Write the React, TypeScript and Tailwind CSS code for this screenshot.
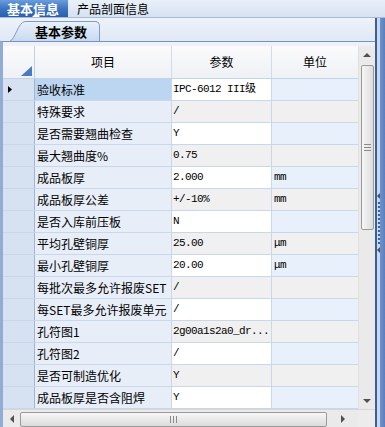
import React from "react";

const rows: [string, string, string][] = [
  ["验收标准", "IPC-6012 III级", ""],
  ["特殊要求", "/", ""],
  ["是否需要翘曲检查", "Y", ""],
  ["最大翘曲度%", "0.75", ""],
  ["成品板厚", "2.000", "mm"],
  ["成品板厚公差", "+/-10%", "mm"],
  ["是否入库前压板", "N", ""],
  ["平均孔壁铜厚", "25.00", "μm"],
  ["最小孔壁铜厚", "20.00", "μm"],
  ["每批次最多允许报废SET", "/", ""],
  ["每SET最多允许报废单元", "/", ""],
  ["孔符图1", "2g00a1s2a0_dr...", ""],
  ["孔符图2", "/", ""],
  ["是否可制造优化", "Y", ""],
  ["成品板厚是否含阻焊", "Y", ""],
];

const Tri = ({ dir }: { dir: "up" | "down" | "left" | "right" }) => {
  const pts =
    dir === "up"
      ? "0,4 4,0 8,4"
      : dir === "down"
      ? "0,0 8,0 4,4"
      : dir === "left"
      ? "4,0 4,8 0,4"
      : "0,0 0,8 4,4";
  const w = dir === "up" || dir === "down" ? 8 : 4;
  const h = dir === "up" || dir === "down" ? 4 : 8;
  return (
    <svg width={w} height={h} viewBox={`0 0 ${w} ${h}`}>
      <polygon points={pts} fill="#505050" />
    </svg>
  );
};

export default function App() {
  return (
    <div className="w-[385px] h-[427px] overflow-hidden flex flex-col bg-[#e3ebf6] font-['Noto_Sans_CJK_SC',sans-serif] text-black">
      {/* top tab bar */}
      <div className="h-[18px] flex items-stretch bg-gradient-to-b from-[#e9f0f9] to-[#d6e2f2] border-b border-[#a9bbd3] shrink-0">
        <div className="relative w-[68px] bg-gradient-to-b from-[#6b9ddc] via-[#3d74c2] to-[#2b5fae] text-white font-bold text-[13px] leading-[17px] pl-[7px]">
          基本信息
          <div className="absolute bottom-0 left-[32px] w-0 h-0 border-l-[4px] border-r-[4px] border-b-[4px] border-l-transparent border-r-transparent border-b-white" />
        </div>
        <div className="pl-[9px] text-[12px] leading-[17px]">产品剖面信息</div>
      </div>

      <div className="flex flex-1 min-h-0">
        <div className="w-[375px] flex flex-col">
          {/* sub tab bar */}
          <div className="h-[23px] shrink-0 flex items-end pl-[10px] bg-gradient-to-b from-[#eef3fa] to-[#dfe8f4]">
            <svg width="15" height="20" viewBox="0 0 15 20" className="block">
              <defs>
                <linearGradient id="tg" x1="0" y1="0" x2="0" y2="1">
                  <stop offset="0" stopColor="#e8f0fa" />
                  <stop offset="1" stopColor="#c9daf0" />
                </linearGradient>
              </defs>
              <path d="M0 20 C 5 19, 8 1, 15 0.5 L15 20 Z" fill="url(#tg)" />
              <path d="M0 20 C 5 19, 8 1, 15 0.5" fill="none" stroke="#7f9cc8" strokeWidth="1" />
            </svg>
            <div className="w-[75px] h-[20px] border-t border-r border-[#7f9cc8] rounded-tr-[5px] bg-gradient-to-b from-[#e8f0fa] to-[#c9daf0] text-[13px] font-bold leading-[19px] text-center pr-[2px]">
              基本参数
            </div>
          </div>

          {/* grid */}
          <div className="flex-1 flex flex-col border-t border-[#7393c6] border-l-[3px] border-l-[#92acd6] bg-[#eef2f8]">
            <div className="h-[4px] shrink-0 bg-[#eef2f8]" />
            <div className="flex">
              <div className="w-[355px] flex flex-col">
                {/* header */}
                <div className="h-[33px] flex border-b border-[#c5d3e6] bg-gradient-to-b from-[#fbfbfc] to-[#eef1f5] text-[12px]">
                  <div className="w-[32px] border-r border-[#c5d0de] flex items-end justify-end pr-[2px] pb-[2px]">
                    <svg width="11" height="10" viewBox="0 0 11 10">
                      <polygon points="11,0 11,10 0,10" fill="#4a7bc0" />
                    </svg>
                  </div>
                  <div className="w-[137px] border-r border-[#d3dbe6] flex items-center justify-center">项目</div>
                  <div className="w-[100px] border-r border-[#d3dbe6] flex items-center justify-center">参数</div>
                  <div className="w-[86px] flex items-center justify-center">单位</div>
                </div>
                {rows.map((r, i) => {
                  const odd = i % 2 === 0;
                  return (
                    <div key={i} className="h-[22px] flex border-b border-[#c9d7ea]">
                      <div className="w-[32px] bg-[#d6e2f1] border-r border-[#9fb5d8] flex items-center pl-[5px]">
                        {i === 0 && (
                          <svg width="4" height="7" viewBox="0 0 4 7">
                            <polygon points="0,0 4,3.5 0,7" fill="#000" />
                          </svg>
                        )}
                      </div>
                      <div
                        className={`w-[137px] border-r border-[#c9d7ea] flex items-center pl-[2px] text-[12px] whitespace-nowrap overflow-hidden ${
                          i === 0 ? "bg-[#bcd6f2]" : "bg-[#e8eef8]"
                        }`}
                      >
                        {r[0]}
                      </div>
                      <div
                        className={`w-[100px] border-r border-[#c9d7ea] flex items-center pl-[1px] text-[11px] tracking-[-0.6px] font-['Liberation_Mono','Noto_Sans_CJK_SC',monospace] whitespace-nowrap overflow-hidden ${
                          odd ? "bg-white" : "bg-[#f0f0f0]"
                        }`}
                      >
                        {r[1]}
                      </div>
                      <div
                        className={`w-[86px] flex items-center pl-[2px] text-[11px] tracking-[-0.6px] font-['Liberation_Mono',monospace] ${
                          odd ? "bg-[#e8f0fb]" : "bg-[#f0f0f0]"
                        }`}
                      >
                        {r[2]}
                      </div>
                    </div>
                  );
                })}
              </div>
              {/* vertical scrollbar */}
              <div className="w-[17px] bg-[#eaeaea] flex flex-col items-center border-l border-[#e0e0e0]">
                <div className="h-[17px] flex items-center justify-center">
                  <Tri dir="up" />
                </div>
                <div className="mt-[2px] w-[13px] h-[165px] rounded-[2px] border border-[#9a9a9a] bg-gradient-to-r from-[#f6f6f6] to-[#dcdcdc] flex flex-col items-center justify-center gap-[2px]">
                  <div className="w-[7px] h-px bg-[#8a8a8a]" />
                  <div className="w-[7px] h-px bg-[#8a8a8a]" />
                  <div className="w-[7px] h-px bg-[#8a8a8a]" />
                </div>
                <div className="flex-1" />
                <div className="h-[17px] flex items-center justify-center">
                  <Tri dir="down" />
                </div>
              </div>
            </div>
            {/* horizontal scrollbar */}
            <div className="h-[18px] flex border-t border-[#d6d6d6] bg-[#eaeaea]">
              <div className="w-[355px] flex items-center">
                <div className="w-[17px] flex items-center justify-center">
                  <Tri dir="left" />
                </div>
                <div className="w-[307px] h-[15px] mt-[2px] self-start rounded-[2px] border border-[#9a9a9a] bg-gradient-to-b from-[#f6f6f6] to-[#dcdcdc] flex items-center justify-center gap-[2px]">
                  <div className="w-px h-[7px] bg-[#8a8a8a]" />
                  <div className="w-px h-[7px] bg-[#8a8a8a]" />
                  <div className="w-px h-[7px] bg-[#8a8a8a]" />
                </div>
                <div className="flex-1 flex items-center justify-center">
                  <Tri dir="right" />
                </div>
              </div>
              <div className="w-[17px] bg-[#ececec]" />
            </div>
          </div>
        </div>

        {/* splitter */}
        <div className="w-[10px] flex border-l-2 border-[#3d5f98]">
          <div className="w-[3px] bg-[#c8d8ee] flex flex-col items-center justify-center gap-[2px]">
            <Tri dir="left" />
            {Array.from({ length: 11 }).map((_, k) => (
              <div key={k} className="w-[2px] h-[2px] bg-[#3d5f98]" />
            ))}
            <Tri dir="left" />
          </div>
          <div className="flex-1 bg-gradient-to-r from-[#6f93cb] to-[#5a80bd]" />
        </div>
      </div>
    </div>
  );
}
